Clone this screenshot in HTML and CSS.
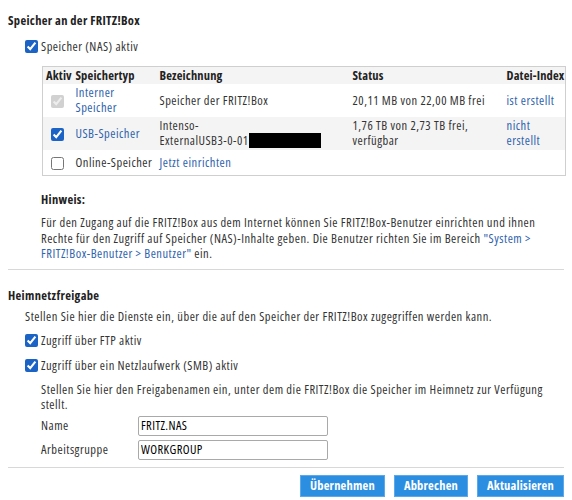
FILE: index.html
```html
<!DOCTYPE html>
<html lang="de">
<head>
    <meta charset="UTF-8">
    <meta name="viewport" content="width=device-width, initial-scale=1.0">
    <title>Speicher (NAS)</title>
    <link rel="stylesheet" href="styles.css">
</head>
<body>
    <div id="page">
        <div class="section">
            <h4 class="sectionTitle">Speicher an der FRITZ!Box</h4>
            <label class="check topCheck"><input type="checkbox" checked> Speicher (NAS) aktiv</label>

            <table class="storageTable">
                <colgroup>
                    <col style="width: 30px">
                    <col style="width: 84px">
                    <col style="width: 193px">
                    <col style="width: 154px">
                    <col>
                </colgroup>
                <thead>
                    <tr>
                        <th>Aktiv</th>
                        <th>Speichertyp</th>
                        <th>Bezeichnung</th>
                        <th>Status</th>
                        <th>Datei-Index</th>
                    </tr>
                </thead>
                <tbody>
                    <tr>
                        <td class="activeCell"><input type="checkbox" checked disabled></td>
                        <td><a href="#">Interner Speicher</a></td>
                        <td>Speicher der FRITZ!Box</td>
                        <td>20,11 MB von 22,00 MB frei</td>
                        <td><a href="#">ist erstellt</a></td>
                    </tr>
                    <tr class="odd">
                        <td class="activeCell"><input type="checkbox" checked></td>
                        <td><a href="#">USB-Speicher</a></td>
                        <td>Intenso-<br>ExternalUSB3-0-01<span class="redacted"></span></td>
                        <td>1,76 TB von 2,73 TB frei, verfügbar</td>
                        <td><a href="#">nicht erstellt</a></td>
                    </tr>
                    <tr class="last">
                        <td class="activeCell"><input type="checkbox"></td>
                        <td>Online-Speicher</td>
                        <td><a href="#">Jetzt einrichten</a></td>
                        <td></td>
                        <td></td>
                    </tr>
                </tbody>
            </table>

            <div class="hint">
                <p class="hintTitle">Hinweis:</p>
                <p class="hintText">Für den Zugang auf die FRITZ!Box aus dem Internet können Sie FRITZ!Box-Benutzer einrichten und ihnen Rechte für den Zugriff auf Speicher (NAS)-Inhalte geben. Die Benutzer richten Sie im Bereich <a href="#">"System &gt; FRITZ!Box-Benutzer &gt; Benutzer"</a> ein.</p>
            </div>
        </div>

        <div class="section shareSection">
            <h4 class="sectionTitle">Heimnetzfreigabe</h4>
            <p class="intro">Stellen Sie hier die Dienste ein, über die auf den Speicher der FRITZ!Box zugegriffen werden kann.</p>
            <label class="check"><input type="checkbox" checked> Zugriff über FTP aktiv</label>
            <label class="check"><input type="checkbox" checked> Zugriff über ein Netzlaufwerk (SMB) aktiv</label>

            <div class="shareBox">
                <p>Stellen Sie hier den Freigabenamen ein, unter dem die FRITZ!Box die Speicher im Heimnetz zur Verfügung stellt.</p>
                <div class="formRow">
                    <label for="shareName">Name</label>
                    <input id="shareName" type="text" value="FRITZ.NAS">
                </div>
                <div class="formRow">
                    <label for="workgroup">Arbeitsgruppe</label>
                    <input id="workgroup" type="text" value="WORKGROUP">
                </div>
            </div>
        </div>

        <div class="buttons">
            <button>Übernehmen</button>
            <button>Abbrechen</button>
            <button>Aktualisieren</button>
        </div>
    </div>
</body>
</html>
```

FILE: styles.css
```css
body {
    margin: 0;
    font-family: "Open Sans", "Liberation Sans", sans-serif;
    font-stretch: condensed;
    font-size: 12.5px;
    letter-spacing: 0.5px;
    line-height: 15px;
    color: #333;
    background-color: white;
}

a {
    color: #2f63ad;
    text-decoration: none;
}

p {
    margin: 0;
}

#page {
    padding: 13px 8px 0;
}

.section {
    border-bottom: 1px solid #d8d8d8;
    padding-bottom: 7px;
}

.shareSection {
    padding-top: 18px;
}

.sectionTitle {
    margin: 0 0 11px;
    font-size: 12.5px;
    font-weight: bold;
    letter-spacing: 0.33px;
    color: #222;
}

.shareSection .sectionTitle {
    margin-bottom: 6px;
}

.check {
    display: flex;
    align-items: center;
    gap: 3px;
    margin-left: 17px;
    margin-bottom: 10px;
}

.check input,
.storageTable input {
    margin: 0;
    width: 13px;
    height: 13px;
    accent-color: #1b63c5;
}

.topCheck {
    margin-bottom: 12px;
}

.storageTable {
    margin-left: 34px;
    width: 524px;
    border: 1px solid #cfcfcf;
    border-collapse: collapse;
    table-layout: fixed;
}

.storageTable th {
    text-align: left;
    font-weight: bold;
    letter-spacing: 0.15px;
    white-space: nowrap;
    padding: 1px 3px;
    background-color: #f4f4f4;
    color: #222;
}

.storageTable td {
    padding: 1px 3px 2px;
    vertical-align: middle;
}

.storageTable .activeCell {
    text-align: center;
    padding: 0;
}

.storageTable .activeCell input {
    vertical-align: middle;
}

.storageTable .odd td {
    background-color: #f4f4f4;
}

.storageTable .last td {
    height: 22px;
}

.redacted {
    display: inline-block;
    width: 72px;
    height: 15px;
    background-color: black;
    vertical-align: top;
}

.hint {
    margin: 16px 0 0 33px;
}

.hintTitle {
    font-weight: bold;
    letter-spacing: 0.33px;
    color: #222;
    margin-bottom: 8px;
}

.hintText {
    line-height: 15.5px;
}

.intro {
    margin: 0 0 9px 17px;
}

.shareBox {
    margin-left: 33px;
}

.shareBox p {
    margin-top: -1px;
}

.formRow {
    display: flex;
    align-items: center;
    margin-top: 4px;
}

.formRow label {
    width: 97px;
}

.formRow input {
    width: 190px;
    height: 20px;
    box-sizing: border-box;
    margin: 0;
    padding: 0 2px;
    border: 1px solid #a9a9a9;
    border-radius: 2px;
    font-family: inherit;
    font-stretch: condensed;
    font-size: 12.5px;
    letter-spacing: 0.4px;
    color: #000;
}

.buttons {
    display: flex;
    justify-content: flex-end;
    gap: 9px;
    padding: 7px 0 3px;
}

.buttons button {
    height: 22px;
    padding: 0 9px;
    border: 1px solid #5aa9ea;
    background-color: #2b8ee0;
    color: white;
    font-family: inherit;
    font-stretch: condensed;
    font-size: 12.5px;
    letter-spacing: 0.2px;
    font-weight: bold;
}
```
